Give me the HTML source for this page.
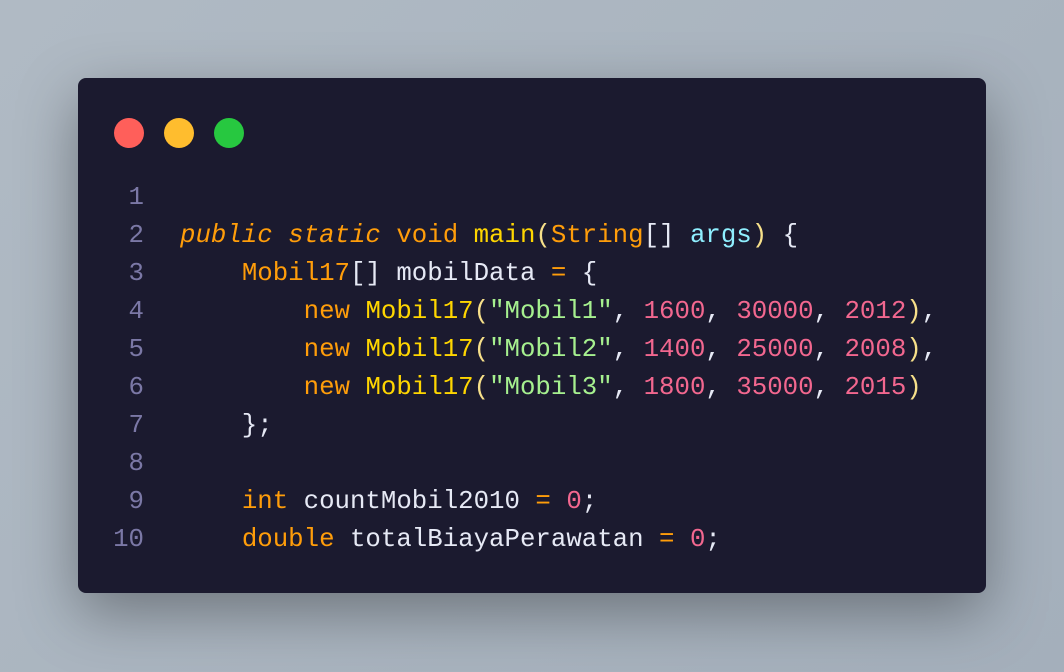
<!DOCTYPE html>
<html><head><style>
body{margin:0;width:1064px;height:672px;background:linear-gradient(135deg,#b0bac4,#a4afbb);position:relative;overflow:hidden;font-family:"Liberation Mono",monospace}
.win{position:absolute;left:78px;top:78px;width:908px;height:515px;background:#1b1a2f;border-radius:8px;box-shadow:0 20px 60px rgba(0,0,0,.35)}
.dot{position:absolute;top:40px;width:30px;height:30px;border-radius:50%}
.code{position:absolute;left:0;top:101px;font-size:25.75px;line-height:38px;white-space:pre;color:#e6e9f5}
.ln{display:inline-block;width:66px;text-align:right;color:#7b78a6;margin-right:36px}
.k{color:#ff9d0a}.i{font-style:italic}.y{color:#ffd600}.p{color:#f7e08a}.c{color:#8fefff}.s{color:#a6f08f}.n{color:#f2678f}.w{color:#e6e9f5}
</style></head><body>
<div class="win">
<div class="dot" style="left:36px;background:#ff5f5a"></div>
<div class="dot" style="left:86px;background:#ffbd2e"></div>
<div class="dot" style="left:136px;background:#27c840"></div>
<div class="code"><div><span class="ln">1</span></div><div><span class="ln">2</span><span class="k i">public</span> <span class="k i">static</span> <span class="k">void</span> <span class="y">main</span><span class="p">(</span><span class="k">String</span>[] <span class="c">args</span><span class="p">)</span> {</div><div><span class="ln">3</span>    <span class="k">Mobil17</span>[] mobilData <span class="k">=</span> {</div><div><span class="ln">4</span>        <span class="k">new</span> <span class="y">Mobil17</span><span class="p">(</span><span class="s">"Mobil1"</span>, <span class="n">1600</span>, <span class="n">30000</span>, <span class="n">2012</span><span class="p">)</span>,</div><div><span class="ln">5</span>        <span class="k">new</span> <span class="y">Mobil17</span><span class="p">(</span><span class="s">"Mobil2"</span>, <span class="n">1400</span>, <span class="n">25000</span>, <span class="n">2008</span><span class="p">)</span>,</div><div><span class="ln">6</span>        <span class="k">new</span> <span class="y">Mobil17</span><span class="p">(</span><span class="s">"Mobil3"</span>, <span class="n">1800</span>, <span class="n">35000</span>, <span class="n">2015</span><span class="p">)</span></div><div><span class="ln">7</span>    };</div><div><span class="ln">8</span></div><div><span class="ln">9</span>    <span class="k">int</span> countMobil2010 <span class="k">=</span> <span class="n">0</span>;</div><div><span class="ln">10</span>    <span class="k">double</span> totalBiayaPerawatan <span class="k">=</span> <span class="n">0</span>;</div></div>
</div>
</body></html>
